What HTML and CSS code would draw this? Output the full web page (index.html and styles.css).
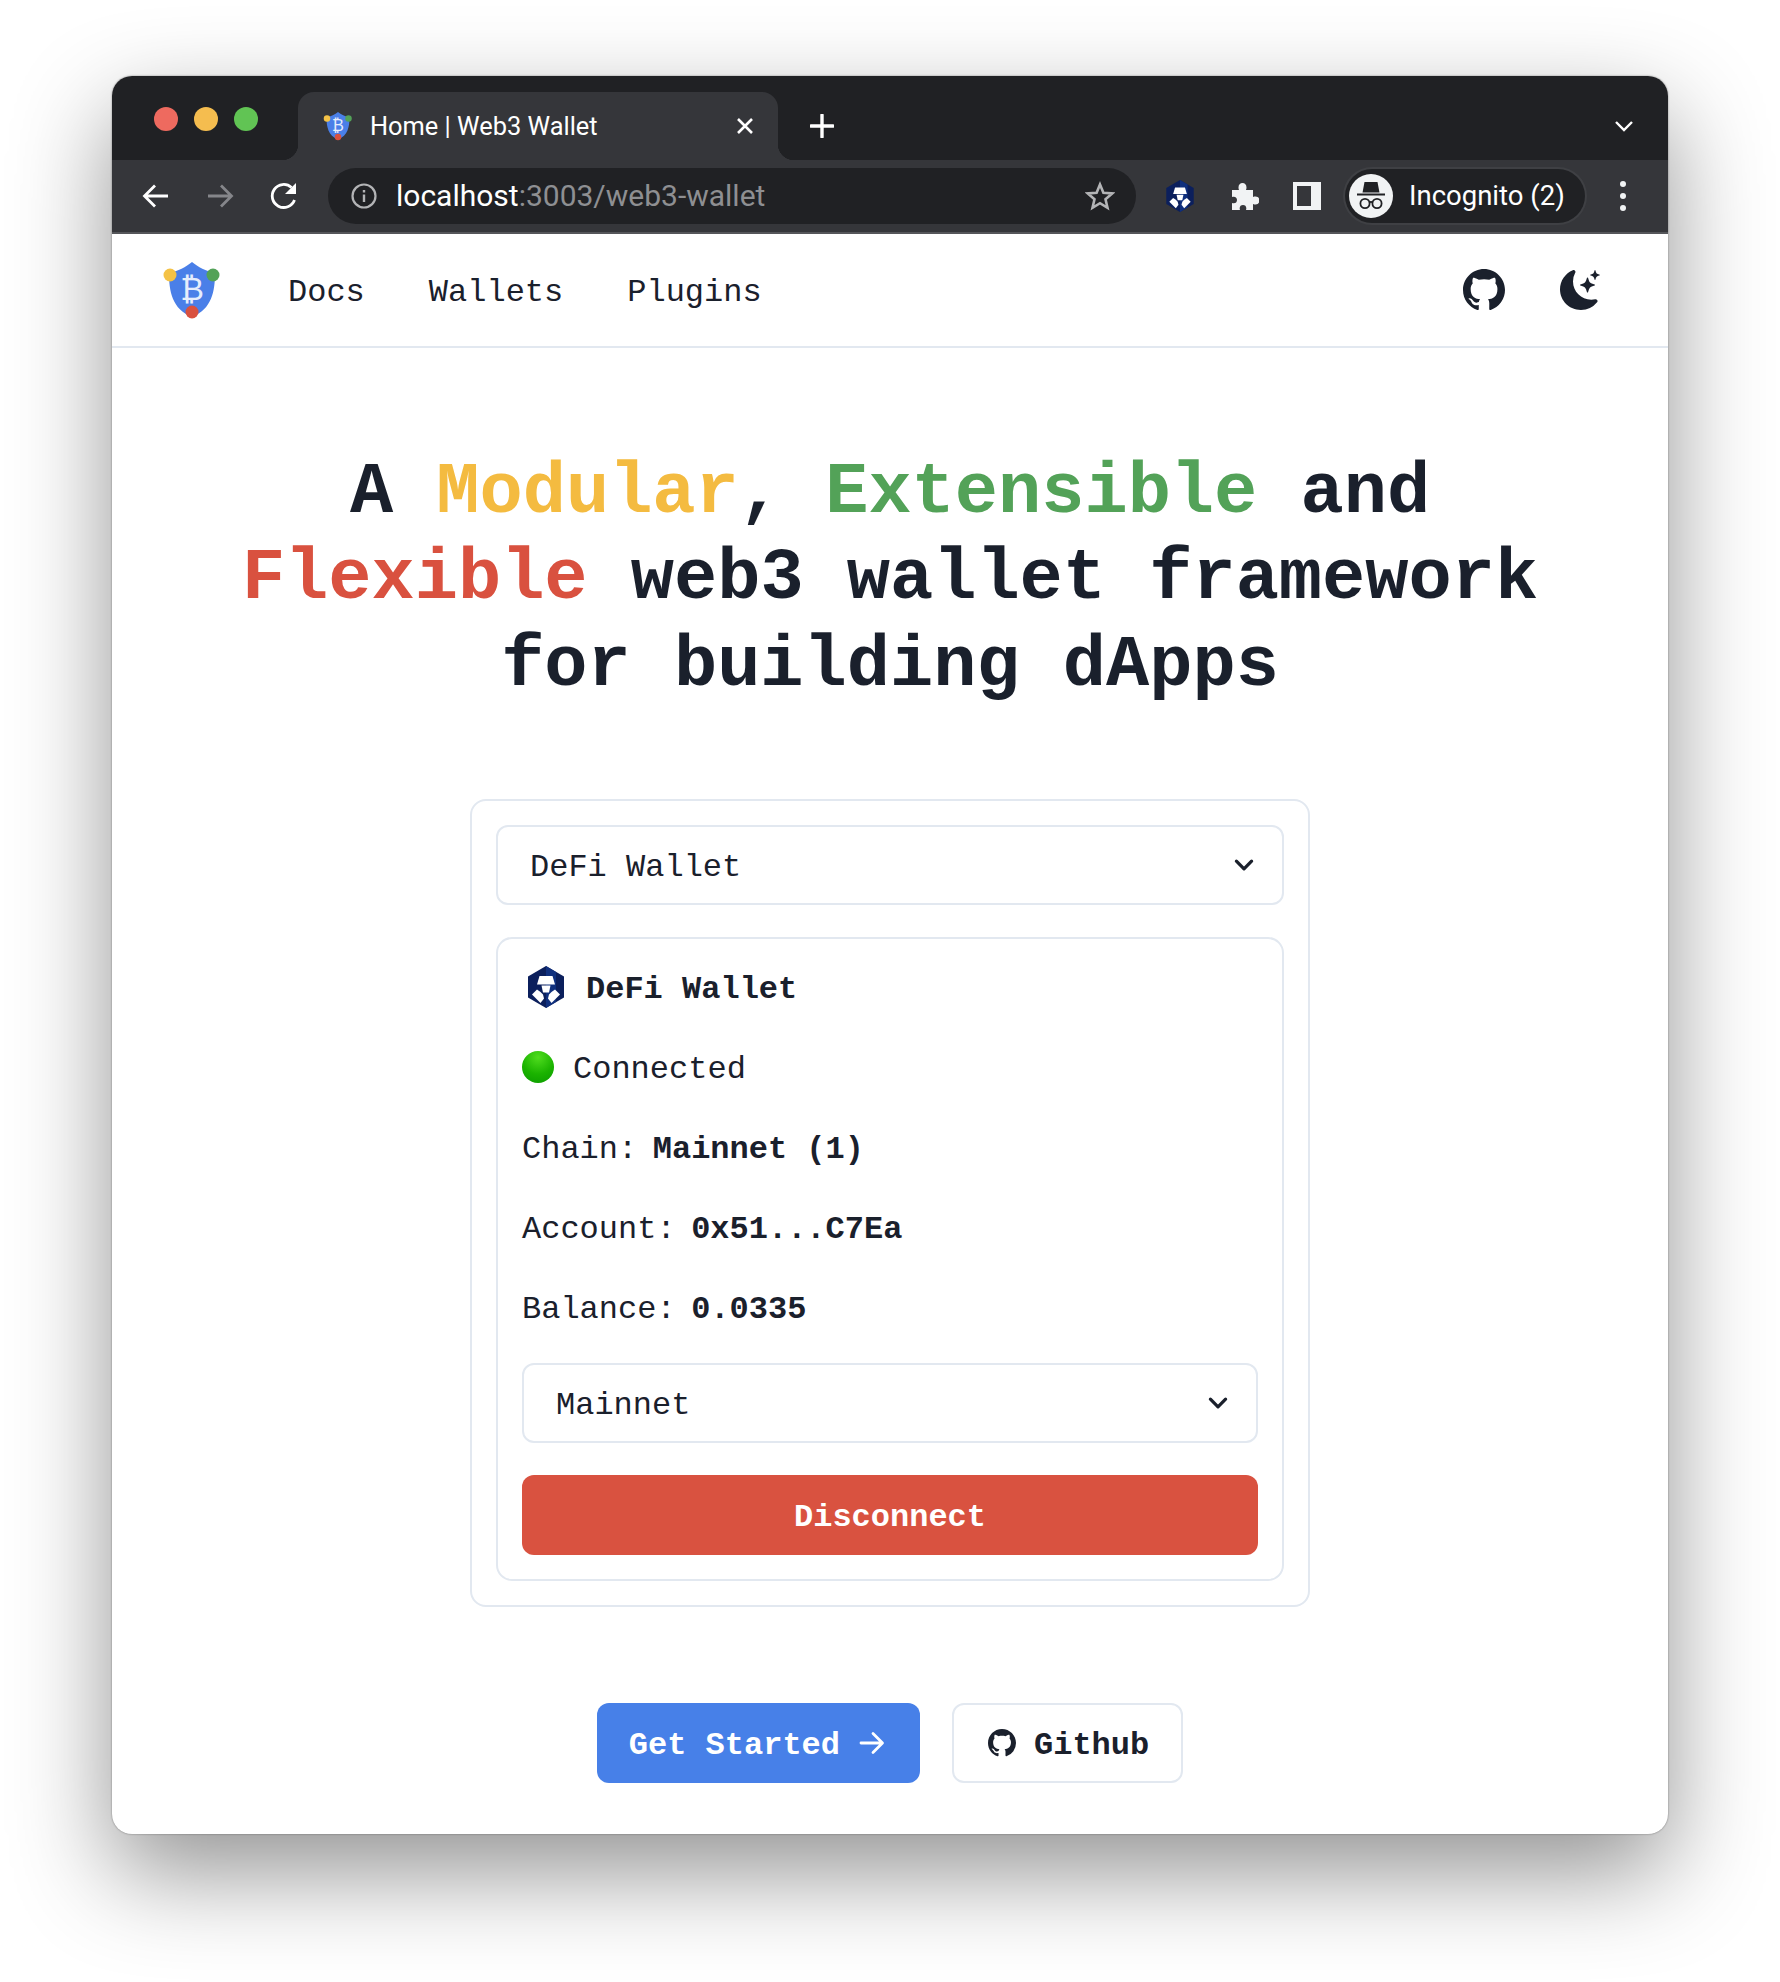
FILE: index.html
```html
<!DOCTYPE html>
<html lang="en">
<head>
  <meta charset="UTF-8">
  <title>Home | Web3 Wallet</title>
  <link rel="stylesheet" href="styles.css">
</head>

<body>
  <svg class="defs" width="0" height="0">
    <defs>
      <symbol id="shield" viewBox="0 0 64 64">
        <path d="M32 4C26 9 18 13 9 15c0 18 3 36 23 44 20-8 23-26 23-44C46 13 38 9 32 4z" fill="#4a7fe8"/>
        <text x="32" y="42" text-anchor="middle" class="shield-b">₿</text>
        <circle cx="10" cy="17" r="6.500" fill="#f4c246"/>
        <circle cx="53" cy="17" r="6.500" fill="#53a258"/>
        <circle cx="32" cy="54" r="6.500" fill="#d9513f"/>
      </symbol>
      <symbol id="crypto" viewBox="0 0 36 42">
        <path d="M18 0L36 10.500v21L18 42 0 31.500v-21z" fill="#0b1f5c"/>
        <path d="M18 0L28 6v30L18 42z" fill="#10307e"/>
        <path d="M11.500 10h13l2.500 8.500H9z" fill="#fff"/>
        <path d="M13.500 19.500h9l-1.500 7h-6z" fill="#fff"/>
        <path d="M9 23.500l3.500 2.500 2.500 2.500 1 4-3.500 4.500-8.500-8.500z" fill="#fff"/>
        <path d="M27 23.500l-3.500 2.500-2.500 2.500-1 4 3.500 4.500 8.500-8.500z" fill="#fff"/>
      </symbol>
      <symbol id="github" viewBox="0 0 16 16">
        <path fill="currentColor" d="M8 0C3.58 0 0 3.58 0 8c0 3.54 2.29 6.53 5.47 7.59.4.07.55-.17.55-.38 0-.19-.01-.82-.01-1.490-2.010.37-2.530-.49-2.690-.94-.09-.23-.48-.94-.82-1.130-.28-.15-.68-.52-.01-.53.63-.01 1.080.58 1.230.82.72 1.210 1.870.87 2.330.66.07-.52.28-.87.51-1.070-1.780-.2-3.640-.89-3.640-3.950 0-.87.31-1.590.82-2.150-.08-.2-.36-1.020.08-2.120 0 0 .67-.21 2.200.82.64-.18 1.320-.27 2-.27.68 0 1.360.09 2 .27 1.530-1.040 2.200-.82 2.200-.82.44 1.100.16 1.920.08 2.120.51.56.82 1.270.82 2.150 0 3.070-1.870 3.750-3.650 3.950.29.25.54.73.54 1.480 0 1.070-.01 1.930-.01 2.200 0 .21.15.46.55.38A8.013 8.013 0 0 0 16 8c0-4.420-3.580-8-8-8z"/>
      </symbol>
      <symbol id="chevron" viewBox="0 0 24 24">
        <path d="M5 8.500l7 7 7-7" fill="none" stroke="currentColor" stroke-width="3" stroke-linecap="round" stroke-linejoin="round"/>
      </symbol>
    </defs>
  </svg>

  <div class="window">
    <div class="tabstrip">
      <div class="lights">
        <span class="light red"></span>
        <span class="light yellow"></span>
        <span class="light green"></span>
      </div>
      <div class="tab">
        <svg class="tab-icon"><use href="#shield"/></svg>
        <span class="tab-title">Home | Web3 Wallet</span>
        <svg class="tab-close" viewBox="0 0 18 18"><path d="M2 2l14 14M16 2L2 16" stroke="#fff" stroke-width="2.600"/></svg>
      </div>
      <svg class="new-tab" viewBox="0 0 24 24"><path d="M12 1v22M1 12h22" stroke="#fff" stroke-width="3.400" stroke-linecap="round"/></svg>
      <svg class="tab-menu" viewBox="0 0 20 12"><path d="M2 2l8 8 8-8" fill="none" stroke="#fff" stroke-width="2.400"/></svg>
    </div>

    <div class="toolbar">
      <svg class="tool-btn" viewBox="0 0 32 32"><path d="M28 16H5M15 5.500L4.500 16 15 26.500" fill="none" stroke="#fff" stroke-width="2.800"/></svg>
      <svg class="tool-btn" viewBox="0 0 32 32"><path d="M4 16h23M17 5.500L27.500 16 17 26.500" fill="none" stroke="#85868a" stroke-width="2.800"/></svg>
      <svg class="tool-btn" viewBox="0 0 32 32"><path d="M26.500 20A11.500 11.500 0 1 1 23.500 7.500" fill="none" stroke="#fff" stroke-width="2.800"/><path d="M28 3v11H17z" fill="#fff"/></svg>
      <div class="omnibox">
        <svg class="info" viewBox="0 0 26 26"><circle cx="13" cy="13" r="11.500" fill="none" stroke="#b3b4b6" stroke-width="2.200"/><path d="M13 11.500v7.500M13 7v2.600" stroke="#b3b4b6" stroke-width="2.400"/></svg>
        <span class="url"><span class="url-host">localhost</span>:3003/web3-wallet</span>
        <svg class="star" viewBox="0 0 30 30"><path d="M15 3.500l3.400 8.200 8.800.7-6.700 5.800 2 8.600-7.500-4.600-7.500 4.600 2-8.600-6.700-5.800 8.800-.7z" fill="none" stroke="#b3b4b6" stroke-width="2.600"/></svg>
      </div>
      <svg class="ext-icon ext-crypto"><use href="#crypto"/></svg>
      <svg class="ext-icon ext-puzzle" viewBox="0 0 30 30"><path d="M3 9h7c-1.500-4 .5-7 3.500-7S18.500 5 17 9h7v7c4-1.500 6.500.5 6.500 3.500S28 24.500 24 23v6h-7c1-3-.5-5-3-5s-4 2-3 5H3v-7c3 1 5-.5 5-3s-2-4-5-3z" fill="#f1f3f4"/></svg>
      <div class="side-panel"></div>
      <div class="profile">
        <span class="avatar">
          <svg viewBox="0 0 44 44"><path d="M15.500 8h13l2 10.500h-17z" fill="#202124"/><path d="M8 20.500h28" stroke="#202124" stroke-width="2"/><circle cx="16" cy="29.500" r="4.600" fill="none" stroke="#202124" stroke-width="1.800"/><circle cx="28" cy="29.500" r="4.600" fill="none" stroke="#202124" stroke-width="1.800"/><path d="M20 28.500c1.300-.8 2.700-.8 4 0" fill="none" stroke="#202124" stroke-width="1.500"/></svg>
        </span>
        <span class="profile-name">Incognito (2)</span>
      </div>
      <div class="kebab"><span></span><span></span><span></span></div>
    </div>

    <header class="site-nav">
      <svg class="site-logo"><use href="#shield"/></svg>
      <nav class="site-links">
        <a href="#docs">Docs</a>
        <a href="#wallets">Wallets</a>
        <a href="#plugins">Plugins</a>
      </nav>
      <svg class="nav-github"><use href="#github"/></svg>
      <svg class="nav-moon" viewBox="0 0 16 16">
        <path fill="currentColor" d="M6 .278a.768.768 0 0 1 .08.858 7.208 7.208 0 0 0-.878 3.460c0 4.021 3.278 7.277 7.318 7.277.527 0 1.040-.055 1.533-.16a.787.787 0 0 1 .81.316.733.733 0 0 1-.031.893A8.349 8.349 0 0 1 8.344 16C3.734 16 0 12.286 0 7.710 0 4.266 2.114 1.312 5.124.06A.752.752 0 0 1 6 .278z"/>
        <path fill="currentColor" d="M10.794 3.148a.217.217 0 0 1 .412 0l.387 1.162c.173.518.579.924 1.097 1.097l1.162.387a.217.217 0 0 1 0 .412l-1.162.387a1.734 1.734 0 0 0-1.097 1.097l-.387 1.162a.217.217 0 0 1-.412 0l-.387-1.162A1.734 1.734 0 0 0 9.310 6.593l-1.162-.387a.217.217 0 0 1 0-.412l1.162-.387a1.734 1.734 0 0 0 1.097-1.097l.387-1.162zM13.863.099a.145.145 0 0 1 .274 0l.258.774c.115.346.386.617.732.732l.774.258a.145.145 0 0 1 0 .274l-.774.258a1.156 1.156 0 0 0-.732.732l-.258.774a.145.145 0 0 1-.274 0l-.258-.774a1.156 1.156 0 0 0-.732-.732l-.774-.258a.145.145 0 0 1 0-.274l.774-.258c.346-.115.617-.386.732-.732L13.863.1z"/>
      </svg>
    </header>

    <main class="hero">
      <h1 class="hero-title">A <span class="c-yellow">Modular</span>, <span class="c-green">Extensible</span> and<br><span class="c-red">Flexible</span> web3 wallet framework<br>for building dApps</h1>

      <section class="card">
        <div class="select">
          <span class="row-text">DeFi Wallet</span>
          <svg class="select-arrow"><use href="#chevron"/></svg>
        </div>

        <div class="wallet">
          <div class="wallet-row">
            <svg class="wallet-logo"><use href="#crypto"/></svg>
            <b class="row-text">DeFi Wallet</b>
          </div>
          <div class="wallet-row"><span class="status-dot"></span><span class="row-text">Connected</span></div>
          <div class="wallet-row"><span class="row-text">Chain:<b class="val">Mainnet (1)</b></span></div>
          <div class="wallet-row"><span class="row-text">Account:<b class="val">0x51...C7Ea</b></span></div>
          <div class="wallet-row"><span class="row-text">Balance:<b class="val">0.0335</b></span></div>
          <div class="select">
            <span class="row-text">Mainnet</span>
            <svg class="select-arrow"><use href="#chevron"/></svg>
          </div>
          <button class="btn btn-red"><span class="btn-text">Disconnect</span></button>
        </div>
      </section>

      <div class="actions">
        <a class="btn btn-blue" href="#start"><span class="btn-text">Get Started</span>
          <svg class="btn-arrow" viewBox="0 0 32 32"><path d="M5 16h21M17 6.500L26.500 16 17 25.500" fill="none" stroke="#fff" stroke-width="2.800" stroke-linecap="round" stroke-linejoin="round"/></svg>
        </a>
        <a class="btn btn-outline" href="#github">
          <svg class="btn-github"><use href="#github"/></svg>
          <span class="btn-text">Github</span>
        </a>
      </div>
    </main>
  </div>
</body>
</html>
```

FILE: styles.css
```css
* {
  margin: 0;
  padding: 0;
  box-sizing: border-box;
}

body {
  background: #fff;
  padding: 76px 112px 148px;
  color: #1a202c;
  font-family: "Liberation Mono", monospace;
  font-size: 32px;
  line-height: 48px;
}

a {
  color: inherit;
  text-decoration: none;
}

.defs {
  position: absolute;
}

.shield-b {
  font-family: "DejaVu Sans", sans-serif;
  font-size: 32px;
  fill: #e6edfc;
}

.window {
  height: 1758px;
  border-radius: 20px;
  overflow: hidden;
  background: #fff;
  box-shadow: 0 38px 98px rgba(0, 0, 0, 0.43), 0 0 2px rgba(0, 0, 0, 0.45);
}

/* browser chrome */
.tabstrip {
  display: flex;
  align-items: flex-end;
  height: 84px;
  background: #202124;
  padding-left: 42px;
}

.lights {
  display: flex;
  gap: 16px;
  width: 144px;
  align-self: flex-start;
  padding-top: 31px;
}

.light {
  width: 24px;
  height: 24px;
  border-radius: 50%;
}

.red { background: #ee6a5f; }
.yellow { background: #f5bd4f; }
.green { background: #61c454; }

.tab {
  position: relative;
  display: flex;
  align-items: center;
  width: 480px;
  height: 68px;
  padding: 0 22px 0 24px;
  background: #35363a;
  border-radius: 16px 16px 0 0;
}

.tab::before,
.tab::after {
  content: "";
  position: absolute;
  bottom: 0;
  width: 16px;
  height: 16px;
}

.tab::before {
  left: -16px;
  background: radial-gradient(circle at 0 0, #202124 16px, #35363a 16.500px);
}

.tab::after {
  right: -16px;
  background: radial-gradient(circle at 100% 0, #202124 16px, #35363a 16.500px);
}

.tab-icon {
  width: 32px;
  height: 32px;
  margin-right: 16px;
  flex: none;
}

.tab-title {
  flex: 1;
  color: #fff;
  font-family: Roboto, sans-serif;
  font-size: 25.400px;
  line-height: 32px;
}

.tab-close {
  width: 18px;
  height: 18px;
  margin-right: 2px;
}

.new-tab {
  width: 24px;
  height: 24px;
  margin: 0 0 22px 32px;
}

.tab-menu {
  width: 20px;
  height: 12px;
  margin: 0 34px 28px auto;
}

.toolbar {
  display: flex;
  align-items: center;
  height: 74px;
  padding-left: 28px;
  background: #35363a;
  border-bottom: 2px solid #55565a;
}

.tool-btn {
  width: 32px;
  height: 32px;
  margin-right: 32px;
  flex: none;
}

.omnibox {
  display: flex;
  align-items: center;
  width: 808px;
  height: 56px;
  margin-left: -4px;
  padding: 0 21px 0 23px;
  border-radius: 28px;
  background: #202124;
}

.info {
  width: 26px;
  height: 26px;
  flex: none;
}

.url {
  flex: 1;
  margin-left: 19px;
  color: #8e8f92;
  font-family: Roboto, sans-serif;
  font-size: 30px;
}

.url-host {
  color: #fff;
}

.star {
  width: 30px;
  height: 30px;
}

.ext-icon {
  flex: none;
}

.ext-crypto {
  width: 28px;
  height: 32px;
  margin-left: 30px;
}

.ext-puzzle {
  width: 30px;
  height: 30px;
  margin-left: 35px;
}

.side-panel {
  width: 28px;
  height: 28px;
  margin-left: 34px;
  border: 4px solid #f1f3f4;
  border-right-width: 10px;
  flex: none;
}

.profile {
  display: flex;
  align-items: center;
  width: 240px;
  height: 54px;
  margin-left: 24px;
  padding-left: 4px;
  border-radius: 27px;
  background: #202124;
  box-shadow: 0 0 0 2px #3f4044;
}

.avatar {
  display: block;
  width: 44px;
  height: 44px;
  border-radius: 50%;
  background: #f1f3f4;
}

.avatar svg {
  display: block;
  width: 44px;
  height: 44px;
}

.profile-name {
  margin-left: 16px;
  color: #fff;
  font-family: Roboto, sans-serif;
  font-size: 27.500px;
}

.kebab {
  display: flex;
  flex-direction: column;
  gap: 6px;
  margin-left: 35px;
}

.kebab span {
  width: 6px;
  height: 6px;
  border-radius: 50%;
  background: #f1f3f4;
}

/* site header */
.site-nav {
  display: flex;
  align-items: center;
  height: 114px;
  padding: 0 48px;
  border-bottom: 2px solid #e2e8f0;
}

.site-logo {
  width: 64px;
  height: 64px;
  flex: none;
}

.site-links {
  display: flex;
  gap: 64px;
  margin-left: 64px;
  flex: 1;
}

.site-links a {
  padding-top: 6px;
}

.nav-github {
  width: 42px;
  height: 42px;
  color: #1a202c;
}

.nav-moon {
  width: 40px;
  height: 40px;
  margin: 0 20px 0 55px;
  color: #1a202c;
}

/* content */
.hero {
  display: flex;
  flex-direction: column;
  align-items: center;
  padding-top: 96px;
}

.hero-title {
  padding-top: 6px;
  font-size: 72px;
  line-height: 86.400px;
  font-weight: 700;
  text-align: center;
}

.c-yellow { color: #f4bb40; }
.c-green { color: #53a258; }
.c-red { color: #d9513f; }

.card {
  display: flex;
  flex-direction: column;
  gap: 32px;
  width: 840px;
  margin-top: 90px;
  padding: 24px;
  border: 2px solid #e2e8f0;
  border-radius: 16px;
}

.select {
  display: flex;
  align-items: center;
  justify-content: space-between;
  height: 80px;
  padding: 0 25px 0 32px;
  border: 2px solid #e2e8f0;
  border-radius: 12px;
}

.select-arrow {
  width: 26px;
  height: 26px;
}

.row-text {
  padding-top: 6px;
}

.wallet {
  display: flex;
  flex-direction: column;
  gap: 32px;
  padding: 24px;
  border: 2px solid #e2e8f0;
  border-radius: 16px;
}

.wallet-row {
  display: flex;
  align-items: center;
  height: 48px;
}

.wallet-logo {
  width: 48px;
  height: 42px;
  margin-right: 16px;
}

.status-dot {
  width: 32px;
  height: 32px;
  margin-right: 19px;
  border-radius: 50%;
  background: radial-gradient(circle at 50% 20%, #4fdc1e, #1bb300 55%, #0a9a00);
}

.val {
  margin-left: 15.500px;
}

.btn {
  display: flex;
  align-items: center;
  justify-content: center;
  height: 80px;
  padding: 0 32px;
  border: none;
  border-radius: 12px;
  font-family: inherit;
  font-size: 32px;
  font-weight: 700;
}

.btn-text {
  padding-top: 5px;
}

.btn-red {
  background: #d95240;
  color: #fff;
}

.actions {
  display: flex;
  gap: 32px;
  margin-top: 96px;
}

.btn-blue {
  background: #4780e8;
  color: #fff;
}

.btn-arrow {
  width: 32px;
  height: 32px;
  margin-left: 16px;
}

.btn-outline {
  border: 2px solid #e2e8f0;
}

.btn-github {
  width: 28px;
  height: 28px;
  margin: 0 18px 0 2px;
}
```
